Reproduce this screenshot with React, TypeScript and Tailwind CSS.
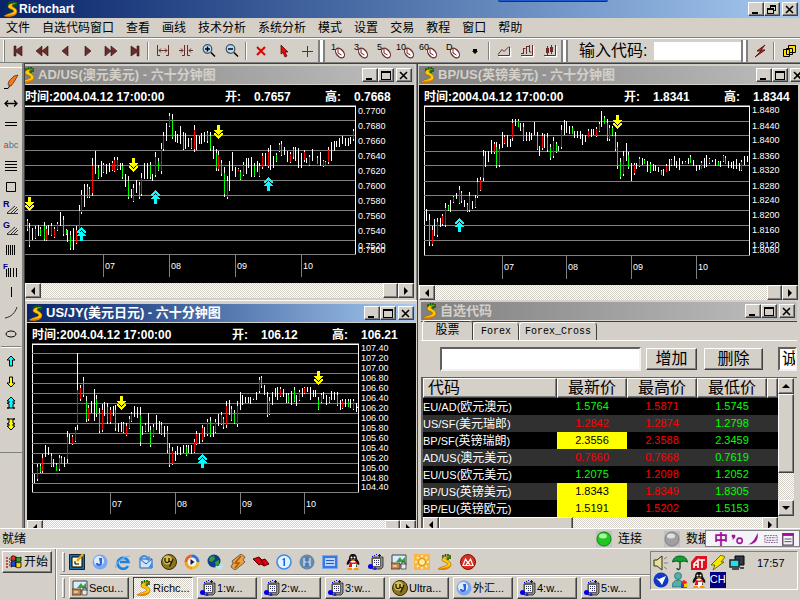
import type { ReactNode } from 'react';

const raised =
    'border border-t-white border-l-white border-r-[#404040] border-b-[#404040] bg-[#d4d0c8] shadow-[inset_-1px_-1px_0_#808080]';
const sunken = 'border-2 border-t-[#606060] border-l-[#606060] border-r-[#f4f2ee] border-b-[#f4f2ee] bg-white';

/* ---------- candle data: x,high,low,colour ---------- */

const AD_DATA = `27,219,231,g 29,223,247,g 32,228,240,w 35,226,239,r 38,225,236,w 40,227,236,g 44,222,241,g 46,226,241,r
48,225,235,w 51,223,236,r 54,227,238,r 57,222,231,r 60,212,226,w 63,216,236,g 66,229,235,g 67,230,242,w 70,231,250,g
73,228,250,w 76,226,244,r 79,205,233,r 81,190,214,r 84,184,207,w 87,184,198,g 89,187,198,g 92,158,196,r 95,151,174,w
98,165,179,g 101,161,177,w 103,163,173,r 106,164,174,w 109,163,172,w 112,161,171,r 114,157,172,r 117,157,170,r
120,163,170,w 122,163,179,g 125,174,187,w 128,176,199,g 131,189,198,w 133,184,202,r 136,180,193,w 139,182,199,g
141,173,196,r 144,163,179,w 147,163,179,w 150,162,179,g 152,174,181,w 155,152,177,r 158,158,171,g 161,143,174,r
163,132,151,r 166,123,141,w 169,113,127,r 172,114,139,g 175,131,142,w 177,134,143,w 180,126,144,w 183,132,150,g
185,133,149,w 188,138,147,w 191,138,149,g 194,125,152,r 196,135,150,w 199,136,144,w 201,133,144,w 204,132,142,w
207,131,143,g 210,132,151,g 213,146,159,w 216,149,171,g 218,151,171,r 221,160,176,g 224,167,197,g 227,176,199,r
229,161,191,w 232,152,171,w 235,167,177,w 238,168,171,r 240,170,180,g 243,162,176,r 246,158,174,w 248,158,168,w
251,157,177,w 254,163,177,g 257,161,172,w 259,163,177,r 262,153,169,r 265,153,166,w 268,148,168,r 270,145,170,w
273,156,168,w 276,153,162,g 279,143,152,r 281,141,156,g 284,147,155,w 287,151,162,w 290,152,163,r 293,147,159,g
295,147,161,w 298,148,168,w 301,153,168,w 304,150,162,r 306,158,163,w 309,155,166,r 312,149,161,w 317,156,164,g
320,152,166,w 323,160,167,r 325,161,165,r 328,147,164,r 331,142,161,w 334,141,151,w 336,141,147,w 339,138,147,w
342,136,144,w 345,138,146,w 348,138,146,w 350,137,144,w 353,129,141,r`;

const BP_DATA = `426,209,221,w 429,214,246,g 432,226,246,r 434,219,236,w 437,218,237,r 440,218,227,w 442,214,226,r 445,203,227,r
448,205,211,g 450,200,212,w 453,196,203,r 456,193,199,w 459,186,204,r 461,191,203,g 464,200,207,w 467,203,212,g
469,192,212,r 472,201,209,w 475,195,208,r 477,178,198,r 480,177,191,r 483,150,181,r 485,151,167,w 488,151,162,w
491,140,154,w 494,142,154,r 496,142,168,g 499,144,167,r 502,132,148,w 504,135,144,r 507,135,147,w 510,139,147,w
512,119,141,r 515,119,126,w 518,119,127,g 520,123,131,w 523,123,141,g 526,132,141,w 529,132,141,w 531,133,140,w
534,122,135,w 537,132,150,g 539,146,156,w 542,133,150,r 544,134,148,w 547,133,152,g 550,144,160,g 553,137,158,r
556,142,153,g 558,146,151,w 561,125,149,r 564,120,135,w 566,121,133,w 569,126,134,w 572,126,134,g 574,131,138,w
577,131,138,w 580,131,139,w 582,134,145,w 585,135,142,w 588,129,137,r 591,129,137,w 593,129,135,w 596,127,137,r
599,122,132,r 601,111,127,w 604,116,124,g 607,119,141,g 609,125,141,r 612,126,136,g 615,132,151,g 617,142,169,g
620,158,179,g 623,151,176,r 626,143,161,w 628,152,169,g 631,163,181,w 634,163,175,r 636,163,169,w 639,157,167,r
642,158,165,w 644,159,164,g 647,161,172,w 650,162,173,g 653,164,171,w 655,165,171,w 658,167,172,w 661,170,175,g
663,169,176,w 666,164,172,r 669,159,171,w 671,159,166,r 674,156,166,w 676,161,168,w 679,158,170,w 682,161,164,w
685,161,164,r 688,158,164,w 690,155,163,g 693,160,166,w 696,165,171,w 699,165,170,w 701,161,169,r 704,158,168,w
706,155,167,w 709,158,164,r 712,160,162,w 715,159,166,w 718,161,166,g 720,161,167,w 723,155,162,r 725,156,164,g
728,161,168,w 731,162,168,w 733,161,169,w 736,159,169,w 739,163,171,w 741,160,171,r 744,156,165,w 747,156,162,w`;

const JY_DATA = `34,474,483,w 37,464,481,r 40,464,473,g 42,454,473,r 45,445,457,w 48,447,455,w 51,453,467,g 53,459,467,w
56,463,471,g 59,455,471,r 61,456,464,g 64,457,467,w 67,431,463,r 69,434,444,w 72,435,445,r 75,427,442,r 77,353,393,w
77,380,430,r 80,385,401,r 83,377,397,g 86,396,422,g 88,405,421,r 91,401,413,w 94,389,421,w 96,395,417,g 99,408,433,g
102,404,432,r 104,402,416,w 107,403,424,g 110,407,424,r 113,406,416,w 115,405,431,g 118,423,432,w 121,422,432,w
123,422,433,g 126,423,436,r 129,416,429,r 131,412,422,r 134,406,417,w 137,407,418,w 140,407,446,g 142,426,435,w
145,423,432,r 148,413,432,w 150,426,447,g 153,424,437,r 156,415,430,w 159,421,434,w 161,422,435,g 164,426,437,w
167,426,453,g 169,443,467,g 172,447,465,r 175,451,461,w 177,446,455,w 180,447,455,w 183,445,453,w 186,445,456,g
188,445,453,w 191,445,454,w 194,439,453,r 196,431,445,r 199,433,444,w 202,425,442,r 204,427,437,w 207,419,436,r
210,417,437,g 213,426,437,w 215,419,433,r 218,414,426,w 221,412,425,r 223,417,429,g 226,401,428,r 229,400,415,w
231,406,421,g 234,410,424,g 237,401,427,r 240,392,410,w 242,395,405,w 245,397,403,w 248,397,403,w 250,397,404,w
253,398,400,r 256,392,400,w 259,377,393,r 261,376,388,g 264,385,395,w 267,392,417,g 269,397,415,r 272,392,405,w
275,388,397,w 277,387,400,w 280,387,397,r 283,389,397,w 286,393,403,w 288,393,403,g 291,391,405,w 294,387,402,g
296,395,406,w 299,390,401,r 302,388,397,w 304,387,394,r 307,387,392,w 310,387,400,w 313,390,397,w 315,390,397,w
318,397,410,g 321,393,403,r 323,392,399,w 326,395,405,w 329,397,403,g 331,391,400,w 334,392,400,w 337,392,406,g
340,400,410,w 342,399,409,r 345,399,407,w 348,399,407,g 350,399,408,w 353,399,410,r 356,403,412,w 357,406,408,r`;

interface ChartSpec {
    view: [number, number, number, number];
    left: number;
    right: number;
    top: number;
    bottom: number;
    framed: boolean;
    lines: number[];
    labels: [string, number][];
    ticks: number[];
    tickEnd: number;
    data: string;
    marks: [number, number, 'up' | 'down'][];
}

const step = (start: number, count: number, by: number) => Array.from({ length: count }, (_, i) => start + i * by);

const AD: ChartSpec = {
    view: [25, 105, 389, 178],
    left: 25, right: 355, top: 106, bottom: 254, framed: false,
    lines: step(120, 9, 15),
    labels: [
        ...step(0, 10, 1).map((i): [string, number] => [(0.77 - i * 0.002).toFixed(4), 114 + i * 15]),
        ['0.7500', 253],
    ],
    ticks: [103, 169, 235, 301], tickEnd: 277,
    data: AD_DATA,
    marks: [[29, 197, 'down'], [133, 158, 'down'], [218, 125, 'down'], [81, 227, 'up'], [155, 190, 'up'], [268, 177, 'up']],
};

const BP: ChartSpec = {
    view: [419, 105, 379, 180],
    left: 424, right: 749, top: 106, bottom: 255, framed: true,
    lines: [121, 135, 151, 165, 181, 195, 210, 225, 240],
    labels: [
        ['1.8480', 113], ['1.8440', 129], ['1.8400', 143], ['1.8360', 159], ['1.8320', 173], ['1.8280', 189],
        ['1.8240', 203], ['1.8200', 218], ['1.8160', 233], ['1.8120', 248], ['1.8080', 253],
    ],
    ticks: [502, 566, 631, 696], tickEnd: 279,
    data: BP_DATA,
    marks: [[459, 218, 'up'], [617, 115, 'down']],
};

const JY: ChartSpec = {
    view: [27, 343, 389, 177],
    left: 32, right: 358, top: 344, bottom: 492, framed: true,
    lines: step(353, 14, 10),
    labels: [
        ...step(0, 14, 1).map((i): [string, number] => [(107.4 - i * 0.2).toFixed(2), 351 + i * 10]),
        ['104.40', 490],
    ],
    ticks: [110, 175, 240, 304], tickEnd: 514,
    data: JY_DATA,
    marks: [[121, 396, 'down'], [318, 371, 'down'], [202, 454, 'up']],
};

function Marker({ x, y, dir }: { x: number; y: number; dir: 'up' | 'down' }) {
    const up = dir === 'up';
    return (
        <g transform={up ? `translate(${x - 4},${y + 14}) scale(1,-1)` : `translate(${x - 4},${y})`} fill={up ? '#00ffff' : '#ffff00'}>
            <path d="M3 0h3v5h3l-4.500 5L0 5h3zM0 8h2l2.500 3L7 8h2v1l-4.500 5L0 9z" />
        </g>
    );
}

function CandleChart({ spec }: { spec: ChartSpec }) {
    const { left, right, top, bottom } = spec;
    const candles = spec.data.trim().split(/\s+/).map((item) => item.split(','));
    return (
        <svg width={spec.view[2]} height={spec.view[3]} viewBox={spec.view.join(' ')} className="block shrink-0" shapeRendering="crispEdges">
            <rect x={left} y={top - 1} width={right - left + 1} height={1} fill="#808080" />
            <rect x={left} y={top} width={right - left + 1} height={1} fill="#fff" />
            {spec.framed && <rect x={left} y={top} width={1} height={bottom - top} fill="#fff" />}
            {spec.lines.map((y) => (
                <rect key={y} x={left} y={y} width={right - left} height={1} fill="#808080" />
            ))}
            {candles.map(([x, h, l, c], i) => {
                const high = Number(h);
                const low = Number(l);
                const size = low - high;
                return (
                    <g key={i}>
                        <rect x={x} y={high} width={1} height={size} fill="#fff" />
                        {c !== 'w' && (
                            <rect
                                x={x}
                                y={high + Math.round(size * 0.2)}
                                width={1}
                                height={Math.max(1, Math.round(size * 0.7))}
                                fill={c === 'r' ? '#ff0000' : '#00ff00'}
                            />
                        )}
                    </g>
                );
            })}
            <rect x={left} y={bottom} width={right - left + 1} height={1} fill="#808080" />
            <rect x={right} y={top} width={1} height={bottom - top} fill="#fff" />
            {spec.ticks.map((x, i) => (
                <g key={x}>
                    <rect x={x} y={bottom} width={1} height={spec.tickEnd - bottom} fill="#808080" />
                    <text x={x + 2} y={bottom + 15} fill="#fff" className="text-[9px]">
                        {['07', '08', '09', '10'][i]}
                    </text>
                </g>
            ))}
            {spec.labels.map(([label, y]) => (
                <text key={label} x={right + 3} y={y} fill="#fff" className="text-[9px]">
                    {label}
                </text>
            ))}
            {spec.marks.map(([x, y, dir]) => (
                <Marker key={`${x}-${y}`} x={x} y={y} dir={dir} />
            ))}
        </svg>
    );
}

/* ---------- icons ---------- */

function Logo({ className = 'size-4' }: { className?: string }) {
    return (
        <svg viewBox="0 0 16 16" className={`${className} shrink-0`} aria-hidden="true">
            <path d="M6 1v6M8.500 0v8M11 0v6M13 1v4" stroke="#006400" strokeWidth="1.600" />
            <path d="M13.500 2C9 2 4.500 3 5 6c.4 2.500 6 2 5.500 4.500C10 12 5 12 1 15c5 1.200 12.500.5 13-4.500.3-3.500-5-4-5-6 0-1.200 2.500-1.500 4.500-2.500z" fill="#ffc800" stroke="#8a4a00" strokeWidth=".5" />
            <path d="M1 15c5 1.200 12 .6 13-4-2.500 3-7 2.500-13 4z" fill="#f07800" />
        </svg>
    );
}

function Glyph({ children, className = 'size-4' }: { children: ReactNode; className?: string }) {
    return (
        <svg viewBox="0 0 16 16" className={`${className} shrink-0`} fill="none" aria-hidden="true">
            {children}
        </svg>
    );
}

const M = '#6b2b2b';

const prev = 'M11 3v10L5 8z';
const next = 'M5 3v10l6-5z';

function Clock({ label }: { label: string }) {
    return (
        <svg viewBox="0 0 20 18" className="h-[18px] w-5" fill="none" aria-hidden="true">
            <text x={label.length > 1 ? 0 : 4} y="8" className="text-[9px]" fill="#000">{label}</text>
            <ellipse cx="13" cy="11" rx="3.500" ry="5.500" transform="rotate(-40 13 11)" fill="#fff" stroke={M} strokeWidth="1.200" />
            <path d="M11 7v4l3.500 2" stroke={M} />
        </svg>
    );
}

const navIcons: [string, ReactNode][] = [
    ['First', <path d="M3 3v10h2V9l6 4V3L5 7V3z" fill={M} stroke="#301010" strokeWidth=".6" />],
    ['Fast back', <path d="M8 3v10L2 8zM14 3v10L8 8z" fill={M} stroke="#301010" strokeWidth=".6" />],
    ['Back', <path d={prev} fill={M} stroke="#301010" strokeWidth=".6" />],
    ['Forward', <path d={next} fill={M} stroke="#301010" strokeWidth=".6" />],
    ['Fast forward', <path d="M2 3v10l6-5zM8 3v10l6-5z" fill={M} stroke="#301010" strokeWidth=".6" />],
    ['Last', <path d="M13 3v10h-2V9l-6 4V3l6 4V3z" fill={M} stroke="#301010" strokeWidth=".6" />],
];

const scaleIcons: [string, ReactNode][] = [
    ['Widen', <path d="M2.500 2v10.500H5M13.500 2v10.500H11M4 7.500h8M6 5.500l-2 2 2 2M10 5.500l2 2-2 2" stroke={M} />],
    ['Narrow', <path d="M6.500 2v10.500H4M9.500 2v10.500H12M1 7.500h4M3 5.500l2 2-2 2M15 7.500h-4M13 5.500l-2 2 2 2" stroke={M} />],
    ['Zoom in', <><circle cx="6.500" cy="6" r="4.300" fill="#b8dcf8" stroke="#405060" strokeWidth="1.200" /><path d="M4 6h5M6.500 3.500v5M10 9.500l4 4" stroke="#000" strokeWidth="1.500" /></>],
    ['Zoom out', <><circle cx="6.500" cy="6" r="4.300" fill="#b8dcf8" stroke="#405060" strokeWidth="1.200" /><path d="M4 6h5M10 9.500l4 4" stroke="#000" strokeWidth="1.500" /></>],
];

const pointerIcons: [string, ReactNode][] = [
    ['Delete', <path d="M4 4l8 8M12 4l-8 8" stroke="#e00000" strokeWidth="2" />],
    ['Select', <path d="M5 2v9l2-1.500 2 4.500 2-1-2-4h3z" fill="#f00" stroke="#400" strokeWidth=".7" />],
    ['Cross', <path d="M3 8.500h11M8.500 3v11" stroke={M} />],
];

const styleIcons: [string, ReactNode][] = [
    ['Line chart', <><path d="M3 13.500h11.500V5" stroke="#fff" strokeWidth="1.500" /><path d="M2 12.500h11.500V4M2 11.500l4-5 2 2 5-5" stroke={M} /></>],
    ['Bar chart', <><path d="M3 13.500h11.500V3" stroke="#fff" strokeWidth="1.500" /><path d="M2 12.500h11.500V2M4.500 5v6M2 10.500h2M4.500 5.500h2M7.500 3v8M10.500 2v7h2M7.500 3.500h3" stroke={M} /></>],
    ['Candle chart', <><path d="M3 13.500h11.500V3" stroke="#fff" strokeWidth="1.500" /><path d="M2 12.500h11.500V2M5.500 3v9M9.500 2v9" stroke={M} /><path d="M4 5h3v5H4zM8 4h3v5H8z" fill={M} /></>],
];

const upArrow = 'M8 3l4 4h-2.500v6h-3V7H4z';
const downArrow = 'M8 13l4-4H9.500V3h-3v6H4z';

const drawIcons: [string, ReactNode][] = [
    ['Brush', <><path d="M1 14.500h4l2-3" stroke="#000" /><path d="M15 1l-4 7-3 4-3-1 1-4 5-5z" fill="#f07820" stroke="#703000" strokeWidth=".8" /></>],
    ['Horizontal arrow', <path d="M2 8.500h12M5 5.500l-3 3 3 3M11 5.500l3 3-3 3" stroke="#000" strokeWidth="1.300" />],
    ['Parallel', <path d="M2 6.500h12M2 9.500h12" stroke="#000" />],
    ['Text', null],
    ['Lines', <path d="M2 3.500h12M2 6.500h12M2 9.500h12M2 12.500h12" stroke="#000" />],
    ['Rectangle', <path d="M3.500 3.500h9v9h-9z" stroke="#000" />],
    ['Regression', <><text x="0" y="7" className="text-[9px] font-bold" fill="#000080">R</text><path d="M4 13.500h11M4 13l8-7M8 13l6-6M11 13l4-4" stroke="#303030" /></>],
    ['Gann', <><text x="0" y="7" className="text-[9px] font-bold" fill="#000080">G</text><path d="M4 13.500h11M4 13l8-7M8 13l6-6M11 13l4-4" stroke="#303030" /></>],
    ['Cycle', <path d="M3.500 3v10M5.500 3v10M7.500 3v10M9.500 3v10M11.500 3v10" stroke="#000" />],
    ['Fibonacci', <><text x="0" y="6" className="text-[8px] font-bold" fill="#000080">F</text><path d="M3.500 6v8M5.500 5v9M7.500 5v9M10.500 5v9M13.500 5v9" stroke="#000" /></>],
    ['Vertical', <path d="M8.500 3v10" stroke="#000" />],
    ['Arc', <path d="M2 13c6-1 10-5 12-11" stroke="#303030" />],
    ['Ellipse', <ellipse cx="8" cy="8" rx="5" ry="3" stroke="#000" />],
];

const arrowIcons: [string, ReactNode][] = [
    ['Mark up', <path d={upArrow} fill="#0ff" stroke="#000" />],
    ['Mark down', <path d={downArrow} fill="#ff0" stroke="#000" />],
    ['Mark double up', <path d="M8 2l4 4h-2v2h2l-2 1v4h2H4h2V9L4 8h2V6H4z" fill="#0ff" stroke="#000" />],
    ['Mark double down', <path d="M8 14l4-4h-2V8h2l-2-1V3h2H4h2v4L4 8h2v2H4z" fill="#ff0" stroke="#000" />],
];

const PhoneIcon = () => (
    <Glyph>
        <path d="M4 4l2-1h9v10l-2 2H4z" fill="#909090" stroke="#202020" strokeWidth=".8" />
        <path d="M4.500 4.500h8v8h-8z" fill="#f4f4f4" stroke="#404040" strokeWidth=".8" />
        <path d="M6 6.500h1M8 6.500h1M10 6.500h1M6 8.500h1M8 8.500h1M10 8.500h1M8 10.500h1M10 10.500h1" stroke="#303060" />
        <path d="M4 2.500h1M6 1.500h1M8 .5h1M10 1.500h3M11.500 0v3" stroke="#0000e0" />
        <circle cx="2.500" cy="12.500" r="2.500" fill="#0000f0" />
        <circle cx="7" cy="14.500" r="1.500" fill="#2020d0" />
        <path d="M11 13h2v1h-2z" fill="#00e000" />
    </Glyph>
);

const SwirlIcon = () => (
    <Glyph>
        <circle cx="8" cy="8" r="7.500" fill="#7aa8f0" />
        <circle cx="7" cy="7" r="5" fill="#dfeafd" />
        <path d="M7 4h3v5a3 3 0 01-6 0h2a1 1 0 002 0z" fill="#2b5fd8" />
    </Glyph>
);

const UltraIcon = () => (
    <Glyph>
        <circle cx="8" cy="8" r="7.500" fill="#8a7420" stroke="#3a3000" />
        <circle cx="6.500" cy="6" r="4.500" fill="#d8c058" />
        <path d="M4 4v3c0 2 4 2 4 0V4M8 7l2.500 1.500L12 5M10.500 8.500l-2 4" stroke="#201800" strokeWidth="1.300" />
    </Glyph>
);

const SecureIcon = () => (
    <Glyph>
        <path d="M1 1h14v10H1z" fill="#d8ecff" stroke="#404040" />
        <path d="M5 8l4-5 2 3 3-3v5z" fill="#38a038" />
        <path d="M0 9h9v6H0z" fill="#c08850" stroke="#503010" strokeWidth=".8" />
        <path d="M2 12h4" stroke="#fff" />
        <path d="M10 10h5v5h-5z" fill="#e8e8e8" stroke="#404040" strokeWidth=".8" />
        <path d="M11 10V8h3v2" stroke="#404040" />
    </Glyph>
);

const PenguinIcon = () => (
    <Glyph>
        <path d="M8 0c3 0 4 2 4 5 2 2 3 5 2 6l-2-1v3H4v-3l-2 1c-1-1 0-4 2-6 0-3 1-5 4-5z" fill="#101010" />
        <ellipse cx="8" cy="10.500" rx="3.500" ry="4" fill="#fff" />
        <circle cx="6.500" cy="3.500" r="1" fill="#fff" />
        <circle cx="9.500" cy="3.500" r="1" fill="#fff" />
        <path d="M5 5.500h6L8 7zM3 14h4v2H2zM9 14h4l1 2H9z" fill="#ff9000" />
        <path d="M4 7.500c2 1.500 6 1.500 8 0v1.500c-2 1.200-3 1.200-5 1v3H5V9z" fill="#e01020" />
    </Glyph>
);

const quickLaunch: [string, ReactNode][] = [
    ['Desktop', <Glyph><path d="M.5 .5h15v15H.5z" fill="#1870a8" stroke="#102030" /><path d="M3 3h10v10H3z" fill="#fff8d8" stroke="#000" /><path d="M6 10h4M6 7v3" stroke="#000" /><path d="M14 0l-6 7" stroke="#e8a800" strokeWidth="2.500" /></Glyph>],
    ['Browser', <SwirlIcon />],
    ['Internet Explorer', <Glyph><path d="M13 12a5.500 5.500 0 11.500-4H5" stroke="#2080e0" strokeWidth="2.600" /><path d="M1 14C-1 11 8 2 15 2" stroke="#70b8f0" strokeWidth="1.200" /></Glyph>],
    ['Outlook', <Glyph><path d="M2 5h12v9H2z" fill="#cfe4fb" stroke="#2860b0" /><path d="M2 5l6 5 6-5" stroke="#2860b0" /><path d="M1 5c2-5 7-5 9-2l2-1-1 5-4-2 1.500-1C7 2 4 3 3 6z" fill="#3890e8" /><path d="M14 8l1 5-5 1z" fill="#3890e8" /></Glyph>],
    ['UltraEdit', <UltraIcon />],
    ['Media Player', <Glyph><path d="M8 .5A7.500 7.500 0 00.500 8H8z" fill="#f06020" /><path d="M8 .5A7.500 7.500 0 0115.500 8H8z" fill="#3070e0" /><path d="M8 15.500A7.500 7.500 0 01.500 8H8z" fill="#f0a020" /><path d="M8 15.500A7.500 7.500 0 0015.500 8H8z" fill="#e8c030" /><circle cx="8" cy="8" r="4.500" fill="#f4f4f4" /><path d="M6.500 5l4 3-4 3z" fill="#102040" /></Glyph>],
    ['Globe', <Glyph><circle cx="7" cy="7" r="6.500" fill="#103c90" /><path d="M3 3l4-1 1 3-3 3-3-1zM8 8l4-2v4l-3 3z" fill="#30a030" /><path d="M8 12h6v-3l2 4-4 3z" fill="#b8e8e8" /></Glyph>],
    ['Winamp', <Glyph><path d="M11 0l4 3-2 3 2 2-10 8-4-3 2-4-1-2z" fill="#f0a040" stroke="#606060" /><path d="M11 2L5 9h4l-4 5" stroke="#b05800" strokeWidth="1.500" /></Glyph>],
    ['Reader', <Glyph><path d="M0 5l6-2 3 3 3-1 4 5-5 2-3-2-2 1z" fill="#e00010" stroke="#500" /><path d="M7 4l4 7" stroke="#500" /></Glyph>],
    ['One', <Glyph><circle cx="8" cy="8" r="7" fill="#e4f0ff" stroke="#3a90e8" strokeWidth="1.600" /><path d="M6 6l2-2h1v8H7.500V6z" fill="#1068d8" /></Glyph>],
    ['H', <Glyph><circle cx="8" cy="8" r="7.500" fill="#6888a8" /><path d="M5 4v8M11 4v8M5 8h6" stroke="#b8d0f0" strokeWidth="1.500" /><path d="M8 3v10" stroke="#3868c0" /></Glyph>],
    ['Screen', <Glyph><path d="M.5 1.500h15v13H.5z" fill="#3878e0" stroke="#78a8f0" /><path d="M3 4h10v8H3z" fill="#b8d4fa" /><path d="M4 6.500h8M4 9.500h8" stroke="#2858c0" /></Glyph>],
    ['QQ', <PenguinIcon />],
    ['Terminal', <PhoneIcon />],
    ['Secure', <SecureIcon />],
    ['Sun', <Glyph><path d="M0 0h16v16H0z" fill="#f8b848" /><circle cx="8" cy="8" r="3.500" fill="#fff0a0" stroke="#e88000" /><path d="M8 1v2M8 13v2M1 8h2M13 8h2M3 3l1.500 1.500M11.500 11.500L13 13M13 3l-1.500 1.500M4.500 11.500L3 13" stroke="#fff8c0" strokeWidth="1.500" /></Glyph>],
    ['Richchart', <Logo />],
    ['M', <Glyph><circle cx="8" cy="8" r="7.500" fill="#d83020" stroke="#801008" /><path d="M3 11.500h10L10.500 5 8 9 5.500 5zM6 11l2-3 2 3" stroke="#fff" strokeWidth="1.200" /></Glyph>],
];

const tasks: [ReactNode, string][] = [
    [<SecureIcon />, 'Secu...'],
    [<Logo />, 'Richc...'],
    [<PhoneIcon />, '1:w...'],
    [<PhoneIcon />, '2:w...'],
    [<PhoneIcon />, '3:w...'],
    [<UltraIcon />, 'Ultra...'],
    [<SwirlIcon />, '外汇...'],
    [<PhoneIcon />, '4:w...'],
    [<PhoneIcon />, '5:w...'],
];

/* ---------- shared parts ---------- */

function ToolButton({ label, children }: { label: string; children: ReactNode }) {
    return (
        <button aria-label={label} className="flex h-[21px] w-[23px] shrink-0 items-center justify-center">
            {children}
        </button>
    );
}

const Divider = () => <span className="mx-[2px] h-[18px] w-[2px] shrink-0 border-l border-[#808080] bg-white" />;
const Grip = () => <span className="h-[22px] w-[7px] shrink-0 border-x-2 border-l-[#808080] border-r-[#808080] bg-white" />;

function WindowButtons({ restore = false }: { restore?: boolean }) {
    const base = `flex h-[14px] w-4 items-center justify-center ${raised}`;
    return (
        <div className="flex shrink-0">
            <button aria-label="Minimize" className={base}>
                <svg viewBox="0 0 10 9" className="h-[9px] w-[10px]"><path d="M1 7h6v2H1z" /></svg>
            </button>
            <button aria-label="Maximize" className={base}>
                <svg viewBox="0 0 10 9" className="h-[9px] w-[10px]" fill="none" stroke="#000" shapeRendering="crispEdges">
                    {restore ? <path d="M3.500 3V.5h5v5H7M3 1.500h6M.5 3.500h6v5h-6zM0 4.500h7" /> : <path d="M0 .5h9v8H.5V0M0 1.500h9" />}
                </svg>
            </button>
            <button aria-label="Close" className={`ml-[2px] ${base}`}>
                <svg viewBox="0 0 10 9" className="h-[9px] w-[10px]"><path d="M1 1l7 7M8 1L1 8" stroke="#000" strokeWidth="1.600" /></svg>
            </button>
        </div>
    );
}

function TitleBar({ title, active = false }: { title: string; active?: boolean }) {
    const tone = active ? 'from-[#0a246a] to-[#a6caf0] text-white' : 'from-[#808080] to-[#c0c0c0] text-[#d4d0c8]';
    return (
        <div className={`flex h-[18px] shrink-0 items-center bg-linear-to-r pr-[2px] text-[13px] font-bold leading-4 ${tone}`}>
            <Logo className="ml-[1px] mr-[2px] size-4" />
            <h2 className="flex-1 whitespace-nowrap">{title}</h2>
            <WindowButtons />
        </div>
    );
}

function Arrow({ d }: { d: string }) {
    return <svg viewBox="0 0 8 8" className="size-2"><path d={d} /></svg>;
}

const dither = 'bg-[repeating-conic-gradient(#fff_0_25%,#d4d0c8_0_50%)] bg-size-[2px_2px]';

function HScroll({ thumbEnd = true }: { thumbEnd?: boolean }) {
    const btn = `flex h-[15px] w-4 shrink-0 items-center justify-center ${raised}`;
    return (
        <div className={`flex h-[15px] shrink-0 ${dither}`}>
            <button aria-label="Scroll left" className={btn}><Arrow d="M6 0v8L2 4z" /></button>
            {!thumbEnd && <span className={`h-[15px] w-[134px] ${raised}`} />}
            <span className="flex-1" />
            {thumbEnd && <span className={`h-[15px] w-[15px] ${raised}`} />}
            <button aria-label="Scroll right" className={btn}><Arrow d="M2 0v8l4-4z" /></button>
        </div>
    );
}

function QuoteHead({ open, high }: { open: string; high: string }) {
    return (
        <div className="flex h-5 shrink-0 items-end whitespace-nowrap text-xs font-bold leading-4 text-white">
            <span className="w-[200px]">时间:2004.04.12 17:00:00</span>
            <span className="w-[29px]">开:</span>
            <span className="w-[71px]">{open}</span>
            <span className="w-[29px]">高:</span>
            <span>{high}</span>
        </div>
    );
}

/* ---------- quote list ---------- */

const rows: { code: string; name: string; last: string; high: string; low: string; tone: 'up' | 'down' | 'flash' }[] = [
    { code: 'EU/AD', name: '欧元澳元', last: '1.5764', high: '1.5871', low: '1.5745', tone: 'up' },
    { code: 'US/SF', name: '美元瑞郎', last: '1.2842', high: '1.2874', low: '1.2798', tone: 'down' },
    { code: 'BP/SF', name: '英镑瑞朗', last: '2.3556', high: '2.3588', low: '2.3459', tone: 'flash' },
    { code: 'AD/US', name: '澳元美元', last: '0.7660', high: '0.7668', low: '0.7619', tone: 'down' },
    { code: 'EU/US', name: '欧元美元', last: '1.2075', high: '1.2098', low: '1.2052', tone: 'up' },
    { code: 'BP/US', name: '英镑美元', last: '1.8343', high: '1.8349', low: '1.8305', tone: 'flash' },
    { code: 'BP/EU', name: '英镑欧元', last: '1.5191', high: '1.5202', low: '1.5153', tone: 'flash' },
];

const tones = { up: 'text-[#00ff00]', down: 'text-[#ff0000]', flash: 'bg-[#ffff00] text-black' };

function QuoteList() {
    const th = `h-5 overflow-hidden p-0 text-center text-base font-normal leading-[18px] ${raised}`;
    return (
        <div className="flex min-h-0 flex-1 overflow-hidden border-l-2 border-t border-[#606060]">
            <div className="flex min-w-0 flex-1 flex-col">
                <table className="w-full table-fixed border-separate border-spacing-0 bg-black">
                    <colgroup>
                        <col className="w-[134px]" />
                        <col className="w-[70px]" />
                        <col className="w-[70px]" />
                        <col className="w-[70px]" />
                        <col />
                    </colgroup>
                    <thead>
                        <tr>
                            <th className={`${th} pl-1 text-left`}>代码</th>
                            <th className={th}>最新价</th>
                            <th className={th}>最高价</th>
                            <th className={th}>最低价</th>
                            <th className={th} aria-label="more" />
                        </tr>
                    </thead>
                    <tbody>
                        {rows.map((r) => (
                            <tr key={r.code} className="h-[17px] text-center text-[11px] leading-[17px] even:bg-[#303030]">
                                <td className="h-[17px] whitespace-nowrap p-0 text-left leading-4 text-white">
                                    {r.code}(<span className="text-xs leading-4">{r.name}</span>)
                                </td>
                                <td className={`p-0 ${tones[r.tone]}`}>{r.last}</td>
                                <td className="p-0 text-[#ff0000]">{r.high}</td>
                                <td className="p-0 text-[#00ff00]">{r.low}</td>
                                <td className="p-0" />
                            </tr>
                        ))}
                    </tbody>
                </table>
                <HScroll thumbEnd={false} />
            </div>
            <div className="flex w-4 shrink-0 flex-col">
                <div className={`flex h-[138px] flex-col ${dither}`}>
                    <button aria-label="Scroll up" className={`flex h-4 items-center justify-center ${raised}`}><Arrow d="M0 6h8L4 2z" /></button>
                    <span className={`h-[79px] ${raised}`} />
                    <span className="flex-1" />
                    <button aria-label="Scroll down" className={`flex h-4 items-center justify-center ${raised}`}><Arrow d="M0 2h8L4 6z" /></button>
                </div>
            </div>
            <span className="w-[3px] shrink-0" />
        </div>
    );
}

function WatchWindow() {
    const tab = 'h-[18px] whitespace-nowrap rounded-t-sm border border-b-0 border-l-white border-t-white border-r-[#404040] font-mono text-[10px] leading-4';
    return (
        <section className="flex min-h-0 min-w-0 flex-col overflow-hidden border-l border-l-[#404040] pl-[3px] pr-[3px] pt-[2px]">
            <TitleBar title="自选代码" />
            <div className="mt-[1px] flex h-5 shrink-0 items-end border-b border-white border-t border-t-[#404040] pl-[1px] font-['Liberation_Mono','Noto_Sans_CJK_SC',monospace]" role="tablist">
                <button role="tab" aria-selected="true" className="h-5 w-[51px] rounded-t-sm border border-b-0 border-l-white border-t-white border-r-[#404040] text-xs leading-4">股票</button>
                <button role="tab" className={`w-[46px] ${tab} font-['Liberation_Mono',monospace]`}>Forex</button>
                <button role="tab" className={`w-[78px] ${tab} font-['Liberation_Mono',monospace]`}>Forex_Cross</button>
            </div>
            <div className="flex h-[36px] shrink-0 items-center pl-[19px] text-base leading-5">
                <input aria-label="代码" className={`h-6 min-w-0 flex-1 outline-none ${sunken}`} />
                <button className={`ml-[5px] h-[22px] w-[51px] leading-5 ${raised}`}>增加</button>
                <button className={`ml-[7px] h-[22px] w-[59px] leading-5 ${raised}`}>删除</button>
                <div className={`ml-[15px] h-6 w-[19px] overflow-hidden whitespace-nowrap leading-5 ${sunken}`}>
                    <select aria-label="方案" className="w-20 appearance-none pl-[2px]"><option>诚信</option></select>
                </div>
            </div>
            <QuoteList />
        </section>
    );
}

/* ---------- app ---------- */

const menus = ['文件', '自选代码窗口', '查看', '画线', '技术分析', '系统分析', '模式', '设置', '交易', '教程', '窗口', '帮助'];

function Led({ on }: { on: boolean }) {
    return (
        <svg viewBox="0 0 16 16" className="size-4 shrink-0" aria-hidden="true">
            <path d="M0 0h16v16H0z" fill="#c0c0c0" />
            <circle cx="8" cy="8" r="7" fill={on ? '#20c820' : '#a0a0a0'} stroke={on ? '#108010' : '#808080'} />
            <ellipse cx="7" cy="5" rx="4" ry="2.500" fill={on ? '#a8f8a0' : '#e0e0e0'} />
        </svg>
    );
}

// language bar, floats over the status bar
function ImeBar() {
    return (
        <div className="absolute right-0 top-[1px] flex h-[17px] w-[95px] items-center justify-between border border-[#808080] bg-[#f4f4f8] pl-2 pr-1 text-[#a0109c]">
            <span className="text-sm font-bold leading-4">中</span>
            <Glyph className="h-[14px] w-[14px]"><path d="M2 3h4v3l-3 3V6H2z" fill="#a0109c" /><circle cx="11" cy="10" r="3" stroke="#a0109c" strokeWidth="1.800" /></Glyph>
            <Glyph className="h-[14px] w-[14px]"><path d="M12 1c2 8-4 14-11 13 6-2 8-6 11-13z" fill="#a0109c" /></Glyph>
            <Glyph className="h-[14px] w-4"><path d="M1 4h14v8H1zM3 6.500h10M3 9.500h10" stroke="#907098" strokeDasharray="2 1" strokeWidth="1.300" /></Glyph>
            <Glyph className="h-[14px] w-[14px]"><path d="M2 2h12v13H2z" stroke="#604060" strokeWidth="1.500" /><path d="M2 3h12" stroke="#a0109c" strokeWidth="3" /><path d="M4 8h8M4 11h8" stroke="#404040" /></Glyph>
        </div>
    );
}

function Tray() {
    return (
        <div className="mr-[2px] mt-[2px] flex h-[39px] w-[148px] shrink-0 border border-t-[#808080] border-l-[#808080] border-r-white border-b-white pl-[2px] pt-[2px]">
            <div className="grid h-[34px] w-[92px] grid-cols-5 place-items-center gap-x-[2px]">
                <Glyph><path d="M1 5h3l5-4v14l-5-4H1z" fill="#e8e0a0" stroke="#303000" /><path d="M11 4l3-2M11 8h4M11 12l3 2" stroke="#808080" /></Glyph>
                <Glyph><path d="M8 1c5 0 7 3 7.500 6L12 6 8 7 4 6 .500 7C1 4 3 1 8 1z" fill="#10a030" stroke="#004010" strokeWidth=".8" /><path d="M8 7v6c0 2-3 2-3 0" stroke="#004010" strokeWidth="1.300" /></Glyph>
                <Glyph><path d="M5 1h11v12l-2 2H0V7z" fill="#e01020" /><path d="M3 13V9l4-4v8M3 10h4M8 5h6M11 5v8" stroke="#fff" strokeWidth="1.600" /></Glyph>
                <Glyph><path d="M11 0l4 2-4 5h3L3 15l2-5H1z" fill="#f8e800" stroke="#505000" strokeWidth=".8" /></Glyph>
                <Glyph><path d="M6 1h9v9H6z" fill="#303848" stroke="#000" /><path d="M1 5h9v7H1z" fill="#20e0f0" stroke="#202020" strokeWidth="1.500" /><path d="M3 14h7M11 13h4" stroke="#202020" strokeWidth="1.500" /></Glyph>
                <Glyph><circle cx="8" cy="8" r="7.500" fill="#1038c0" /><path d="M3 6l3 1 7-3-4 9-2-3z" fill="#fff" /></Glyph>
                <Glyph><circle cx="6" cy="4" r="3.500" fill="#50b0b0" stroke="#205050" strokeWidth=".6" /><path d="M0 15c0-5 3-7 6-7s6 2 6 7z" fill="#50b0b0" stroke="#205050" strokeWidth=".6" /><path d="M9 10l3-2 3 2-1 3 1 3H9z" fill="#f02020" /><path d="M9 12l3 1-1 3H9z" fill="#2040f0" /><path d="M12 12l4-1v4h-4z" fill="#f8d000" /></Glyph>
                <PenguinIcon />
                <span className="flex size-4 items-center justify-center bg-[#000080] text-[11px] text-white">CH</span>
            </div>
            <time className="ml-[12px] mt-[1px] text-[11px] leading-4">17:57</time>
        </div>
    );
}

export default function App() {
    return (
        <main className="relative flex h-screen flex-col overflow-hidden bg-[#d4d0c8] font-['Liberation_Sans','Noto_Sans_CJK_SC',sans-serif] text-xs text-black">
            <div className="absolute left-[498px] top-0 h-[2px] w-[110px] rounded-b-sm border-b border-[#103080] bg-[#2058c8]" />
            <header className="flex h-[18px] shrink-0 items-center bg-linear-to-r from-[#0a246a] to-[#a6caf0] pl-[3px] pr-[2px] font-bold text-white">
                <Logo />
                <h1 className="flex-1 leading-4">Richchart</h1>
                <WindowButtons restore />
            </header>

            <nav className="flex h-5 shrink-0 items-center">
                {menus.map((m) => (
                    <button key={m} className="whitespace-nowrap px-[6px] leading-4">{m}</button>
                ))}
            </nav>

            <div className="flex h-[25px] shrink-0 items-center border-b border-b-[#808080] border-t border-t-white shadow-[0_-1px_0_#808080]">
                <span className="ml-[3px] mr-[2px] h-[22px] w-[2px] shrink-0 border-l border-white bg-[#808080]" />
                {navIcons.map(([label, icon]) => <ToolButton key={label} label={label}><Glyph>{icon}</Glyph></ToolButton>)}
                <Divider />
                {scaleIcons.map(([label, icon]) => <ToolButton key={label} label={label}><Glyph>{icon}</Glyph></ToolButton>)}
                <Divider />
                {pointerIcons.map(([label, icon]) => <ToolButton key={label} label={label}><Glyph>{icon}</Glyph></ToolButton>)}
                <Grip />
                {['1', '3', '5', '10', '60', 'D'].map((label) => <ToolButton key={label} label={label}><Clock label={label} /></ToolButton>)}
                <ToolButton label="More"><Glyph><path d="M6 6h4v2h1l-3 3-3-3h1z" fill="#000" /></Glyph></ToolButton>
                <Divider />
                {styleIcons.map(([label, icon]) => <ToolButton key={label} label={label}><Glyph>{icon}</Glyph></ToolButton>)}
                <Grip />
                <label htmlFor="code" className="ml-[11px] shrink-0 whitespace-nowrap text-base leading-5">输入代码:</label>
                <input id="code" className="ml-[7px] h-[18px] w-[84px] min-w-0 flex-1 bg-white outline-none" />
                <Grip />
                <ToolButton label="Trade"><Glyph><path d="M13 2L5 8h4l-6 6 10-7H9z" fill="#a03030" stroke="#601818" /></Glyph></ToolButton>
                <Divider />
                <ToolButton label="Layout"><Glyph><path d="M7.500 2.500h7v7h-7z" fill="#ffe000" stroke="#000" /><path d="M2.500 6.500h6v7h-6z" fill="#ffe000" stroke="#000" /><path d="M5.500 5.500h6v6h-6z" stroke="#000" /></Glyph></ToolButton>
            </div>

            <div className="flex min-h-0 flex-1">
                <aside className="flex w-6 shrink-0 flex-col items-center border-r-2 border-r-[#808080]">
                    <div className="mt-[4px] flex w-full flex-col items-center border-b border-t border-b-[#808080] border-t-white pb-[18px] pt-[3px]">
                        {drawIcons.map(([label, icon]) => (
                            <button key={label} aria-label={label} className="flex h-[21px] w-full items-center justify-center">
                                {icon ? <Glyph>{icon}</Glyph> : (
                                    <span className="text-[9px] leading-3">
                                        <span className="text-[#d03020]">a</span><span className="text-[#2080d0]">b</span><span className="text-[#208060]">c</span>
                                    </span>
                                )}
                            </button>
                        ))}
                        <span className="my-[2px] h-[2px] w-5 border-t border-[#808080] bg-white" />
                        {arrowIcons.map(([label, icon]) => (
                            <button key={label} aria-label={label} className="flex h-[21px] w-full items-center justify-center"><Glyph>{icon}</Glyph></button>
                        ))}
                    </div>
                </aside>

                <div className="grid min-w-0 flex-1 grid-cols-[392fr_383fr] grid-rows-[236px_1fr] overflow-hidden border-l border-t border-[#404040]">
                    <section className="flex min-h-0 min-w-0 flex-col overflow-hidden border-r border-r-[#808080] pr-[2px] pt-[2px]">
                        <div className="-ml-[6px]"><TitleBar title="AD/US(澳元美元) - 六十分钟图" /></div>
                        <div className="mt-[1px] bg-black">
                            <QuoteHead open="0.7657" high="0.7668" />
                            <CandleChart spec={AD} />
                        </div>
                        <HScroll />
                    </section>
                    <section className="flex min-h-0 min-w-0 flex-col overflow-hidden border-l border-l-[#404040] pl-[1px] pr-[2px] pt-[2px]">
                        <div className="-mr-[10px]"><TitleBar title="BP/US(英镑美元) - 六十分钟图" /></div>
                        <div className="mt-[1px] bg-black pl-[5px]">
                            <QuoteHead open="1.8341" high="1.8344" />
                            <div className="-ml-[5px]"><CandleChart spec={BP} /></div>
                        </div>
                        <HScroll />
                    </section>
                    <section className="flex min-h-0 min-w-0 flex-col overflow-hidden border-t border-t-white pl-[2px] pr-[1px] pt-[3px]">
                        <TitleBar title="US/JY(美元日元) - 六十分钟图" active />
                        <div className="mt-[1px] bg-black pl-[5px]">
                            <QuoteHead open="106.12" high="106.21" />
                            <div className="-ml-[5px]"><CandleChart spec={JY} /></div>
                        </div>
                        <HScroll />
                    </section>
                    <WatchWindow />
                </div>
            </div>

            <footer className="relative flex h-5 shrink-0 items-center border-t border-white pl-[2px] pr-[90px]">
                <span className="flex-1 leading-4">就绪</span>
                <Led on />
                <span className="ml-[6px] w-[46px] leading-4">连接</span>
                <Led on={false} />
                <span className="ml-[6px] w-6 whitespace-nowrap leading-4">数据</span>
                <ImeBar />
            </footer>

            <div className="flex h-[52px] shrink-0 border-t border-white">
                <button className={`ml-[2px] mt-[2px] flex h-[22px] w-[50px] shrink-0 items-center justify-center gap-[2px] whitespace-nowrap ${raised}`}>
                    <Glyph>
                        <path d="M5 3c2-2 3-1 5 0v4c-2-1-3-1-5 0z" fill="#f03020" stroke="#000" strokeWidth=".8" />
                        <path d="M10 3c2 1 3 1 5 0v4c-2 1-3 1-5 0z" fill="#20b030" stroke="#000" strokeWidth=".8" />
                        <path d="M5 8c2-1 3-1 5 0v5c-2-1-3-1-5 0z" fill="#2040e0" stroke="#000" strokeWidth=".8" />
                        <path d="M10 8c2 1 3 1 5 0v5c-2 1-3 1-5 0z" fill="#f8d810" stroke="#000" strokeWidth=".8" />
                        <path d="M0 4h2M3 5h1M0 7h2M3 8h1M0 10h2M3 11h1M0 13h2" stroke="#c02020" strokeWidth="1.300" />
                    </Glyph>
                    开始
                </button>
                <span className="mx-[3px] w-[2px] shrink-0 border-l border-[#808080] bg-white" />
                <div className="min-w-0 flex-1">
                    <div className="flex h-[26px] items-center gap-[7px] border-b border-[#808080] pl-[2px]">
                        <span className="mr-[-3px] h-5 w-[3px] shrink-0 border border-l-white border-r-[#808080] border-t-white border-b-[#808080]" />
                        {quickLaunch.map(([label, icon]) => (
                            <button key={label} aria-label={label} className="size-4 shrink-0">{icon}</button>
                        ))}
                    </div>
                    <div className="flex h-[25px] items-center gap-[4px] border-t border-white pl-[2px]">
                        <span className="h-5 w-[3px] shrink-0 border border-l-white border-r-[#808080] border-t-white border-b-[#808080]" />
                        {tasks.map(([icon, label], i) => (
                            <button
                                key={label}
                                className={`flex h-[22px] w-[60px] shrink-0 items-center gap-[1px] overflow-hidden whitespace-nowrap pl-[2px] text-[11px] leading-4 ${
                                    i === 1 ? `border border-t-[#404040] border-l-[#404040] border-r-white border-b-white ${dither}` : raised
                                }`}
                            >
                                {icon}
                                {label}
                            </button>
                        ))}
                    </div>
                </div>
                <Tray />
            </div>
        </main>
    );
}
